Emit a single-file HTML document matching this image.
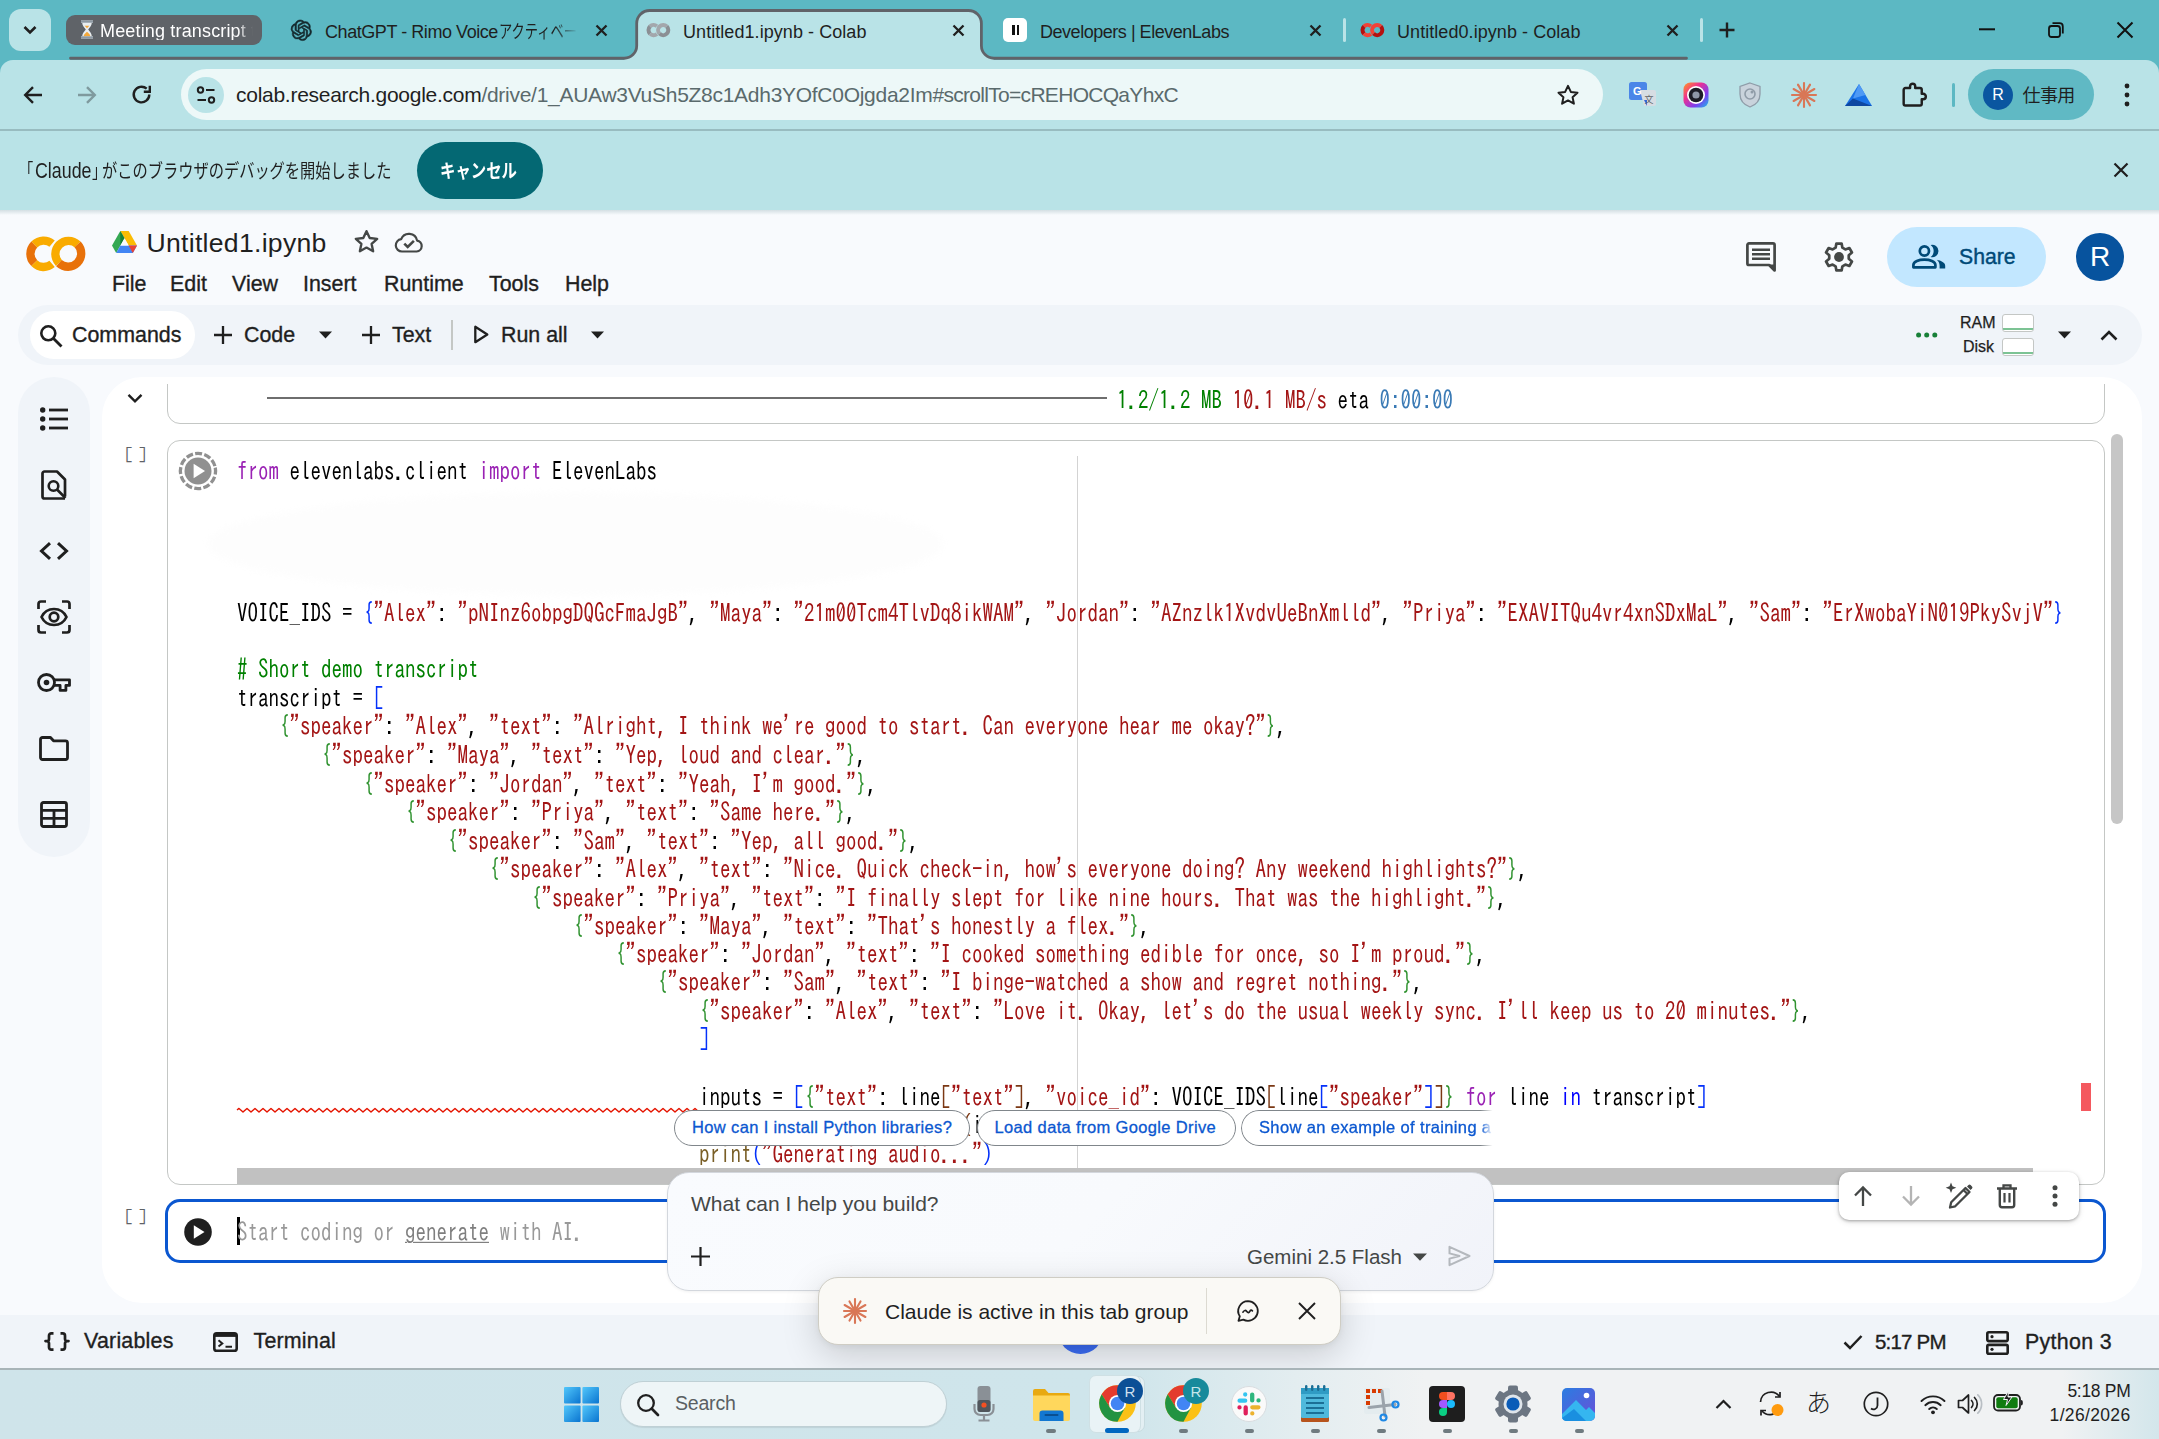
<!DOCTYPE html>
<html lang="ja">
<head>
<meta charset="utf-8">
<title>Untitled1.ipynb - Colab</title>
<style>
*{box-sizing:border-box;margin:0;padding:0}
html,body{width:2159px;height:1439px;overflow:hidden;background:#f8fafd}
body{position:relative;font-family:"Liberation Sans","Noto Sans CJK JP",sans-serif;color:#1f1f1f}
.abs{position:absolute}
.t{position:absolute;white-space:nowrap;line-height:1}
svg{position:absolute;overflow:visible}
/* ---------- browser chrome ---------- */
#tabstrip{position:absolute;left:0;top:0;width:2159px;height:80px;background:#5cb8c3}
#toolbar{position:absolute;left:0;top:60px;width:2159px;height:70px;background:#b9e3e7;border-top-left-radius:13px;border-top-right-radius:13px}
#tbline{position:absolute;left:0;top:129px;width:2159px;height:2px;background:#98bcc0}
#infobar{position:absolute;left:0;top:131px;width:2159px;height:79px;background:#b9e3e7}
#infoshadow{position:absolute;left:0;top:210px;width:2159px;height:5px;background:linear-gradient(#d4dfe3,#f8fafd)}
.tabtxt{font-size:18px;color:#1f1f1f;top:23px}
/* ---------- colab ---------- */
.menu{font-size:21.4px;top:274px;color:#1f1f1f;font-weight:400;-webkit-text-stroke:0.35px #1f1f1f}
.tb{font-size:21.4px;top:325px;color:#1f1f1f;-webkit-text-stroke:0.35px #1f1f1f}
.code{position:absolute;font-family:"IPAGothic","Liberation Mono",monospace;font-size:21px;line-height:23.899px;white-space:pre;color:#000;transform:scaleY(1.19);transform-origin:0 0}
.k{color:#9a22b4}.s{color:#a31515}.b1{color:#0431fa}.b2{color:#319331}.b3{color:#7b3814}.c{color:#008000}.f{color:#795e26}.kb{color:#0000ff}
.chip{position:absolute;top:1110px;height:36px;border:1px solid #80868b;border-radius:18px;background:#fff;color:#0b57d0;font-size:16.5px;line-height:33px;padding-left:17px;white-space:nowrap;overflow:hidden;letter-spacing:0.36px;-webkit-text-stroke:0.3px #0b57d0}
</style>
</head>
<body>
<!-- ================= TAB STRIP ================= -->
<div id="tabstrip"></div>
<div id="toolbar"></div>
<div id="tbline"></div>
<div id="infobar"></div>
<div id="infoshadow"></div>

<!--CHROME_START-->
<!-- tab search button -->
<div class="abs" style="left:9px;top:9px;width:42px;height:42px;border-radius:12px;background:#b9e3e7"></div>
<svg style="left:22px;top:24px" width="16" height="12" viewBox="0 0 16 12"><path d="M2.5 3 L8 8.5 L13.5 3" fill="none" stroke="#1f1f1f" stroke-width="2.6"/></svg>
<!-- tab group chip -->
<div class="abs" style="left:66px;top:15px;width:196px;height:30px;border-radius:9px;background:#5f6368"></div>
<svg style="left:80px;top:20px" width="14" height="19" viewBox="0 0 14 19"><path d="M1 0.5h12v2.2h-1.2c0 3-2.2 4.8-3.6 6.8 1.400 2 3.600 3.800 3.600 6.800H13v2.200H1v-2.200h1.200c0-3 2.200-4.800 3.600-6.800C4.400 7.500 2.200 5.700 2.200 2.700H1z" fill="#e9eef2"/><path d="M3.600 16.300c0.400-2 2-3.300 3.400-4.500 1.400 1.200 3 2.500 3.400 4.500z" fill="#f4a83a"/><path d="M4.600 5.800h4.800L7 8.300z" fill="#f4a83a"/><rect x="1" y="0.500" width="12" height="2.200" fill="#8d99a3"/><rect x="1" y="16.300" width="12" height="2.200" fill="#8d99a3"/></svg>
<div class="t" id="grp" style="left:100px;top:21.5px;font-size:18px;letter-spacing:0.16px;color:#fff;width:153px;overflow:hidden;-webkit-mask-image:linear-gradient(90deg,#000 90%,transparent 100%)">Meeting transcript t</div>
<!-- group underline + active tab -->
<svg style="left:0;top:0" width="2159" height="62" viewBox="0 0 2159 62">
 <path d="M624.200 61 V58.250 A12.500 12.500 0 0 0 636.700 45.750 V23.500 A13 13 0 0 1 649.700 10.500 H968.400 A13 13 0 0 1 981.400 23.500 V45.750 A12.500 12.500 0 0 0 993.900 58.250 V61z" fill="#b9e3e7"/>
 <path d="M70.500 58.250 H624.200 A12.500 12.500 0 0 0 636.700 45.750 V23.500 A13 13 0 0 1 649.700 10.500 H968.400 A13 13 0 0 1 981.400 23.500 V45.750 A12.500 12.500 0 0 0 993.900 58.250 H1686.500" fill="none" stroke="#606369" stroke-width="2.800" stroke-linecap="round"/>
 <rect x="1343" y="18" width="3" height="24" rx="1.500" fill="#b9e3e7"/>
 <rect x="1700" y="18" width="3" height="24" rx="1.500" fill="#b9e3e7"/>
</svg>
<!-- tab 2 : ChatGPT -->
<svg style="left:291.200px;top:19.600px" width="20.600" height="20.600" viewBox="0 0 24 24"><path fill="#14292d" stroke="#14292d" stroke-width="0.7" d="M22.2819 9.8211a5.9847 5.9847 0 0 0-.5157-4.9108 6.0462 6.0462 0 0 0-6.5098-2.9A6.0651 6.0651 0 0 0 4.9807 4.1818a5.9847 5.9847 0 0 0-3.9977 2.9 6.0462 6.0462 0 0 0 .7427 7.0966 5.98 5.98 0 0 0 .511 4.9107 6.051 6.051 0 0 0 6.5146 2.9001A5.9847 5.9847 0 0 0 13.2599 24a6.0557 6.0557 0 0 0 5.7718-4.2058 5.9894 5.9894 0 0 0 3.9977-2.9001 6.0557 6.0557 0 0 0-.7475-7.0729zm-9.022 12.6081a4.4755 4.4755 0 0 1-2.8764-1.0408l.1419-.0804 4.7783-2.7582a.7948.7948 0 0 0 .3927-.6813v-6.7369l2.02 1.1686a.071.071 0 0 1 .038.052v5.5826a4.504 4.504 0 0 1-4.4945 4.4944zm-9.6607-4.1254a4.4708 4.4708 0 0 1-.5346-3.0137l.142.0852 4.783 2.7582a.7712.7712 0 0 0 .7806 0l5.8428-3.3685v2.3324a.0804.0804 0 0 1-.0332.0615L9.74 19.9502a4.4992 4.4992 0 0 1-6.1408-1.6464zM2.3408 7.8956a4.485 4.485 0 0 1 2.3655-1.9728V11.6a.7664.7664 0 0 0 .3879.6765l5.8144 3.3543-2.0201 1.1685a.0757.0757 0 0 1-.071 0l-4.8303-2.7865A4.504 4.504 0 0 1 2.3408 7.872zm16.5963 3.8558L13.1038 8.364 15.1192 7.2a.0757.0757 0 0 1 .071 0l4.8303 2.7913a4.4944 4.4944 0 0 1-.6765 8.1042v-5.6772a.79.79 0 0 0-.407-.667zm2.0107-3.0231l-.142-.0852-4.7735-2.7818a.7759.7759 0 0 0-.7854 0L9.409 9.2297V6.8974a.0662.0662 0 0 1 .0284-.0615l4.8303-2.7866a4.4992 4.4992 0 0 1 6.6802 4.66zM8.3065 12.863l-2.02-1.1638a.0804.0804 0 0 1-.038-.0567V6.0742a4.4992 4.4992 0 0 1 7.3757-3.4537l-.142.0805L8.704 5.459a.7948.7948 0 0 0-.3927.6813zm1.0976-2.3654l2.602-1.4998 2.6069 1.4998v2.9994l-2.5974 1.4997-2.6067-1.4997Z"/></svg>
<div class="t tabtxt" id="tab2" style="left:325px;letter-spacing:-0.44px">ChatGPT - Rimo Voice</div>
<div class="t tabtxt" id="tab2j" style="left:499px;width:107px;overflow:hidden;transform:scaleX(0.735);transform-origin:left;-webkit-mask-image:linear-gradient(90deg,#000 70%,transparent 100%)">アクティベーション</div>
<svg style="left:595px;top:24px" width="13" height="13" viewBox="0 0 13 13"><path d="M1.500 1.500 L11.500 11.500 M11.500 1.500 L1.500 11.500" stroke="#1f1f1f" stroke-width="2.300"/></svg>
<!-- tab 3 : active -->
<svg style="left:645.5px;top:22.8px" width="25" height="15" viewBox="0 0 25 15"><g fill="none" stroke-width="4"><path d="M10.88 3.19 A5.1 5.1 0 0 0 3.99 3.49" stroke="#a3a7ac"/><path d="M3.99 3.49 A5.1 5.1 0 0 0 3.99 10.71" stroke="#8b8f94"/><path d="M3.99 10.71 A5.1 5.1 0 0 0 10.88 11.01" stroke="#a3a7ac"/><path d="M20.81 3.49 A5.1 5.1 0 0 0 13.59 10.71" stroke="#a3a7ac"/><path d="M13.59 10.71 A5.1 5.1 0 0 0 20.81 3.49" stroke="#8b8f94"/></g></svg>
<div class="t tabtxt" id="tab3" style="left:683px;letter-spacing:0.06px">Untitled1.ipynb - Colab</div>
<svg style="left:952px;top:24px" width="13" height="13" viewBox="0 0 13 13"><path d="M1.500 1.500 L11.500 11.500 M11.500 1.500 L1.500 11.500" stroke="#1f1f1f" stroke-width="2.300"/></svg>
<!-- tab 4 : ElevenLabs -->
<div class="abs" style="left:1003px;top:18px;width:24px;height:24px;border-radius:5px;background:#fff"></div>
<div class="abs" style="left:1012px;top:25px;width:2.500px;height:10px;background:#111"></div>
<div class="abs" style="left:1016.800px;top:25px;width:2.500px;height:10px;background:#111"></div>
<div class="t tabtxt" id="tab4" style="left:1040px;letter-spacing:-0.47px">Developers | ElevenLabs</div>
<svg style="left:1309px;top:24px" width="13" height="13" viewBox="0 0 13 13"><path d="M1.500 1.500 L11.500 11.500 M11.500 1.500 L1.500 11.500" stroke="#1f1f1f" stroke-width="2.300"/></svg>
<!-- tab 5 : Untitled0 -->
<svg style="left:1359.8px;top:22.8px" width="25" height="15" viewBox="0 0 25 15"><g fill="none" stroke-width="4"><path d="M10.88 3.19 A5.1 5.1 0 0 0 3.99 3.49" stroke="#f24236"/><path d="M3.99 3.49 A5.1 5.1 0 0 0 3.99 10.71" stroke="#b5100f"/><path d="M3.99 10.71 A5.1 5.1 0 0 0 10.88 11.01" stroke="#f24236"/><path d="M20.81 3.49 A5.1 5.1 0 0 0 13.59 10.71" stroke="#f24236"/><path d="M13.59 10.71 A5.1 5.1 0 0 0 20.81 3.49" stroke="#b5100f"/></g></svg>
<div class="t tabtxt" id="tab5" style="left:1397px;letter-spacing:0.06px">Untitled0.ipynb - Colab</div>
<svg style="left:1666px;top:24px" width="13" height="13" viewBox="0 0 13 13"><path d="M1.500 1.500 L11.500 11.500 M11.500 1.500 L1.500 11.500" stroke="#1f1f1f" stroke-width="2.300"/></svg>
<!-- new tab + -->
<svg style="left:1719px;top:22px" width="16" height="16" viewBox="0 0 16 16"><path d="M8 0.500V15.500M0.500 8H15.500" stroke="#1f1f1f" stroke-width="2.400"/></svg>
<!-- window controls -->
<svg style="left:1979px;top:28px" width="16" height="3" viewBox="0 0 16 3"><rect x="0" y="0.300" width="16" height="2" fill="#111"/></svg>
<svg style="left:2048px;top:22px" width="16" height="16" viewBox="0 0 16 16"><rect x="1" y="4" width="11" height="11" rx="2.500" fill="none" stroke="#111" stroke-width="1.800"/><path d="M4.500 1.200H11.500c2 0 3.300 1.300 3.300 3.300V11.500" fill="none" stroke="#111" stroke-width="1.800"/></svg>
<svg style="left:2116px;top:21px" width="18" height="18" viewBox="0 0 18 18"><path d="M1.500 1.500 L16.500 16.500 M16.500 1.500 L1.500 16.500" stroke="#111" stroke-width="2"/></svg>

<!-- ================= TOOLBAR ================= -->
<svg style="left:22px;top:84px" width="22" height="22" viewBox="0 0 22 22"><path d="M20 11H3.500M11 3.200L3.200 11l7.800 7.800" fill="none" stroke="#1f1f1f" stroke-width="2.400"/></svg>
<svg style="left:76px;top:84px" width="22" height="22" viewBox="0 0 22 22"><path d="M2 11H18.500M11 3.200L18.800 11l-7.800 7.800" fill="none" stroke="#7f9a9e" stroke-width="2.400"/></svg>
<svg style="left:130px;top:83px" width="23" height="23" viewBox="0 0 23 23"><path d="M19.300 11.500a7.800 7.800 0 1 1-2.600-5.800" fill="none" stroke="#1f1f1f" stroke-width="2.400"/><path d="M19.800 2.800V8.800H13.800" fill="none" stroke="#1f1f1f" stroke-width="2.400"/></svg>
<div class="abs" style="left:181px;top:69px;width:1422px;height:51px;border-radius:26px;background:#edf8f8"></div>
<div class="abs" style="left:188px;top:77px;width:36px;height:36px;border-radius:18px;background:#b9e3e7"></div>
<svg style="left:196px;top:85px" width="20" height="20" viewBox="0 0 20 20"><g fill="none" stroke="#1f1f1f" stroke-width="2"><circle cx="4.500" cy="5" r="2.700"/><path d="M10 5H18.500"/><circle cx="15.500" cy="15" r="2.700"/><path d="M1.500 15H10"/></g></svg>
<div class="t" id="url" style="left:236px;top:84px;font-size:21px;color:#5a6a6c;letter-spacing:-0.28px"><span style="color:#1f1f1f;letter-spacing:-0.27px">colab.research.google.com</span>/drive/1_AUAw3VuSh5Z8c1Adh3YOfC0Ojgda2Im<span style="letter-spacing:-0.7px">#scrollTo=cREHOCQaYhxC</span></div>
<svg style="left:1556px;top:83px" width="24" height="24" viewBox="0 0 24 24"><path d="M12 2.800l2.850 6.100 6.650.75-4.950 4.500 1.350 6.550L12 17.400 6.100 20.700l1.350-6.550L2.500 9.650l6.650-.75z" fill="none" stroke="#1f1f1f" stroke-width="2" stroke-linejoin="round"/></svg>
<!-- extensions -->
<svg style="left:1629px;top:82px" width="27" height="26" viewBox="0 0 27 26"><rect x="0" y="0" width="18" height="18" rx="2.500" fill="#4a86e8"/><path d="M11 8h14a2 2 0 0 1 2 2v12a2 2 0 0 1-2 2H15z" fill="#d7dde3"/><path d="M18 24l-3-6h3z" fill="#3367d6"/><text x="4" y="13" font-size="11" font-weight="bold" fill="#fff" font-family="Liberation Sans, sans-serif">G</text><text x="15.500" y="21" font-size="9" fill="#5f6368" font-family="Liberation Sans, Noto Sans CJK JP, sans-serif">文</text></svg>
<svg style="left:1683px;top:82px" width="26" height="26" viewBox="0 0 26 26"><defs><linearGradient id="rg" x1="0" y1="0" x2="1" y2="1"><stop offset="0" stop-color="#ff9a1f"/><stop offset=".35" stop-color="#f0308f"/><stop offset=".7" stop-color="#7a3ff0"/><stop offset="1" stop-color="#19c0e8"/></linearGradient></defs><rect x="0.500" y="0.500" width="25" height="25" rx="7" fill="url(#rg)"/><circle cx="13" cy="13" r="9" fill="#fff"/><circle cx="13" cy="13" r="7.300" fill="#1d1d27"/><circle cx="13" cy="13" r="3.600" fill="#8f97a8"/></svg>
<svg style="left:1739px;top:82px" width="22" height="26" viewBox="0 0 22 26"><path d="M11 1L21 4.500V12c0 6.500-4.500 11-10 13C5.500 23 1 18.500 1 12V4.500z" fill="#c9d3dc" stroke="#8f9ca8" stroke-width="1.300"/><circle cx="11" cy="12" r="5" fill="none" stroke="#8f9ca8" stroke-width="1.600"/><circle cx="13" cy="10" r="1.500" fill="#8f9ca8"/></svg>
<svg style="left:1791px;top:82px" width="26" height="26" viewBox="-13 -13 26 26"><g stroke="#d97757" stroke-width="2.100" stroke-linecap="round"><path d="M0 -12V12"/><path d="M0 -12V12" transform="rotate(30)"/><path d="M0 -12V12" transform="rotate(60)"/><path d="M0 -12V12" transform="rotate(90)"/><path d="M0 -12V12" transform="rotate(120)"/><path d="M0 -12V12" transform="rotate(150)"/></g></svg>
<svg style="left:1845px;top:84px" width="27" height="22" viewBox="0 0 27 22"><path d="M14 0L27 22H0z" fill="#1a73e8"/><path d="M14 0L20.500 11 8 14.500z" fill="#4f9af5"/><path d="M0 22L8 14.500 27 22z" fill="#0d47a1"/></svg>
<svg style="left:1899px;top:81px" width="28" height="28" viewBox="0 0 24 24"><path d="M9.500 4.500a2.200 2.200 0 0 1 4.400 0V6h4.100a1.500 1.500 0 0 1 1.500 1.500V11h1.200a2.300 2.300 0 0 1 0 4.600H19.500V19.500A1.500 1.500 0 0 1 18 21H5.500A1.500 1.500 0 0 1 4 19.500V7.500A1.500 1.500 0 0 1 5.500 6H9.500z" fill="none" stroke="#1f1f1f" stroke-width="2.100" stroke-linejoin="round"/></svg>
<div class="abs" style="left:1952px;top:83px;width:3px;height:24px;border-radius:1.500px;background:#5cb8c3"></div>
<div class="abs" style="left:1968px;top:69px;width:126px;height:51px;border-radius:26px;background:#60b9c4"></div>
<div class="abs" style="left:1983px;top:80px;width:30px;height:30px;border-radius:15px;background:#0a56a0"></div>
<div class="t" style="left:1992.300px;top:87px;font-size:16px;color:#fff">R</div>
<div class="t" id="prof" style="left:2022.500px;top:86.500px;font-size:18px;color:#1f1f1f;letter-spacing:-0.6px">仕事用</div>
<svg style="left:2124px;top:83px" width="6" height="24" viewBox="0 0 6 24"><circle cx="3" cy="3" r="2.400" fill="#1f1f1f"/><circle cx="3" cy="12" r="2.400" fill="#1f1f1f"/><circle cx="3" cy="21" r="2.400" fill="#1f1f1f"/></svg>

<!-- ================= INFOBAR ================= -->
<div class="t" id="info0" style="left:18.500px;top:161.500px;font-size:19px;color:#1f1f1f;transform:scaleX(0.75);transform-origin:left">「</div>
<div class="t" id="info1" style="left:35px;top:160px;font-size:22px;color:#1f1f1f;transform:scaleX(0.81);transform-origin:left">Claude</div>
<div class="t" id="info2" style="left:91.500px;top:161.500px;font-size:19px;color:#1f1f1f;transform:scaleX(0.75);transform-origin:left">」</div>
<div class="t" id="info" style="left:102px;top:161.500px;font-size:19px;color:#1f1f1f;transform:scaleX(0.802);transform-origin:left">がこのブラウザのデバッグを開始しました</div>
<div class="abs" style="left:417px;top:142px;width:126px;height:57px;border-radius:28.500px;background:#046873"></div>
<div class="t" id="cancel" style="left:440px;top:162px;font-size:19px;font-weight:bold;color:#fff;transform:scaleX(0.81);transform-origin:left">キャンセル</div>
<svg style="left:2113px;top:162px" width="16" height="16" viewBox="0 0 16 16"><path d="M1.500 1.500 L14.500 14.500 M14.500 1.500 L1.500 14.500" stroke="#1f1f1f" stroke-width="2.200"/></svg>
<!--CHROME_END-->
<!--COLAB_START-->
<!-- ===== Colab header ===== -->
<svg style="left:26px;top:236px" width="60" height="36" viewBox="0 0 60 36">
 <g fill="none" stroke-width="8.300">
  <path d="M26.090 7.690 A13.200 13.200 0 0 0 8.270 8.470" stroke="#f9ab00"/>
  <path d="M8.270 8.470 A13.200 13.200 0 0 0 8.270 27.130" stroke="#e8710a"/>
  <path d="M8.270 27.130 A13.200 13.200 0 0 0 26.090 27.910" stroke="#f9ab00"/>
  <path d="M51.630 8.470 A13.200 13.200 0 0 0 32.970 27.130" stroke="#f9ab00"/>
  <path d="M32.970 27.130 A13.200 13.200 0 0 0 51.630 8.470" stroke="#e8710a"/>
 </g>
</svg>
<svg style="left:112px;top:231px" width="25" height="22" viewBox="0 0 25 22"><path d="M8.300 0h8.400L25 14.400h-8.400z" fill="#fbbc04"/><path d="M8.300 0L0 14.400 4.200 22 12.500 7.300z" fill="#34a853"/><path d="M4.200 22h16.600l4.200-7.600H8.400z" fill="#4285f4"/><path d="M16.600 14.400H25L20.800 22z" fill="#ea4335"/><path d="M8.300 0l4.200 7.300-4.100 7.100z" fill="#188038"/><path d="M8.400 14.400h8.200l-4.100-7.100z" fill="#f8fafd"/></svg>
<div class="t" id="title" style="left:146.500px;top:229.500px;font-size:26.6px;letter-spacing:0.28px;color:#1f1f1f">Untitled1.ipynb</div>
<svg style="left:353.400px;top:228.300px" width="27" height="27" viewBox="0 0 24 24"><path d="M12 2.800l2.850 6.100 6.650.75-4.950 4.500 1.350 6.550L12 17.400 6.100 20.700l1.350-6.550L2.500 9.650l6.650-.75z" fill="none" stroke="#444746" stroke-width="2.100" stroke-linejoin="round"/></svg>
<svg style="left:394px;top:231px" width="30" height="22" viewBox="0 0 30 22"><path d="M8 20.500a6.200 6.200 0 0 1-.8-12.350A8.300 8.300 0 0 1 23.100 9.600a5.500 5.500 0 0 1-.4 10.900z" fill="none" stroke="#444746" stroke-width="2.200" stroke-linejoin="round"/><path d="M10.300 12.600l3.400 3.400 6.200-6.200" fill="none" stroke="#444746" stroke-width="2.600"/></svg>
<div class="t menu" id="m1" style="left:112px">File</div>
<div class="t menu" id="m2" style="left:170px">Edit</div>
<div class="t menu" id="m3" style="left:232px">View</div>
<div class="t menu" id="m4" style="left:303px">Insert</div>
<div class="t menu" id="m5" style="left:384px">Runtime</div>
<div class="t menu" id="m6" style="left:489px">Tools</div>
<div class="t menu" id="m7" style="left:565px">Help</div>
<!-- right header -->
<svg style="left:1746px;top:242px" width="30" height="30" viewBox="0 0 30 30"><path d="M3 1.400h24a1.600 1.600 0 0 1 1.600 1.600V28.500l-5.500-5.500H3a1.600 1.600 0 0 1-1.600-1.600V3A1.600 1.600 0 0 1 3 1.400z" fill="none" stroke="#444746" stroke-width="2.700" stroke-linejoin="round"/><path d="M28.600 28.500l-6-6h6z" fill="#444746"/><path d="M6 7.700h18M6 12.200h18M6 16.700h18" stroke="#444746" stroke-width="2.600"/></svg>
<svg style="left:1823px;top:241px" width="32" height="32" viewBox="-16 -16 32 32"><path d="M3.39 -9.30 L2.61 -13.45 L-2.61 -13.45 L-3.39 -9.30 L-6.36 -7.58 L-10.34 -8.99 L-12.95 -4.46 L-9.75 -1.72 L-9.75 1.72 L-12.95 4.46 L-10.34 8.99 L-6.36 7.58 L-3.39 9.30 L-2.61 13.45 L2.61 13.45 L3.39 9.30 L6.36 7.58 L10.34 8.99 L12.95 4.46 L9.75 1.72 L9.75 -1.72 L12.95 -4.46 L10.34 -8.99 L6.36 -7.58z" fill="none" stroke="#444746" stroke-width="2.700" stroke-linejoin="round"/><circle r="4.900" fill="#444746"/></svg>
<div class="abs" style="left:1887px;top:227px;width:159px;height:60px;border-radius:30px;background:#c2e7ff"></div>
<svg style="left:1912px;top:244px" width="34" height="25" viewBox="0 0 34 25"><g fill="none" stroke="#004a77" stroke-width="2.700"><circle cx="12.400" cy="7" r="4.600"/><path d="M1.400 23.300v-2.200c0-3.600 5.600-5.400 11-5.400s11 1.800 11 5.400v2.200z" stroke-linejoin="round"/></g><path d="M18.600 0.900a6.300 6.300 0 1 1 0 12.200 7.600 7.600 0 0 0 0-12.200z" fill="#004a77"/><path d="M24.800 15.800c4.400.9 8.400 2.800 8.400 6v2.800h-5.600v-2.800c0-2.600-1.100-4.500-2.800-6z" fill="#004a77"/></svg>
<div class="t" id="share" style="left:1959px;top:246px;font-size:21.2px;color:#004a77;-webkit-text-stroke:0.4px #004a77">Share</div>
<div class="abs" style="left:2076px;top:233px;width:48px;height:48px;border-radius:24px;background:#07539e"></div>
<div class="t" id="avR" style="left:2090px;top:243px;font-size:28px;color:#fff">R</div>
<!-- ===== Colab toolbar ===== -->
<div class="abs" style="left:18px;top:305px;width:2124px;height:60px;border-radius:30px;background:#f0f4f9"></div>
<div class="abs" style="left:30px;top:311px;width:165px;height:48px;border-radius:24px;background:#fff"></div>
<svg style="left:39px;top:324px" width="24" height="24" viewBox="0 0 24 24"><circle cx="9.300" cy="9.300" r="7" fill="none" stroke="#1f1f1f" stroke-width="2.600"/><path d="M14.500 14.500L22.500 22.500" stroke="#1f1f1f" stroke-width="2.800"/></svg>
<div class="t tb" id="cmd" style="left:72px">Commands</div>
<svg style="left:214px;top:326px" width="18" height="18" viewBox="0 0 18 18"><path d="M9 0V18M0 9H18" stroke="#1f1f1f" stroke-width="2.300"/></svg>
<div class="t tb" id="codeb" style="left:244px">Code</div>
<svg style="left:319px;top:331px" width="13" height="8" viewBox="0 0 13 8"><path d="M0 0.500h13L6.500 7.500z" fill="#1f1f1f"/></svg>
<svg style="left:362px;top:326px" width="18" height="18" viewBox="0 0 18 18"><path d="M9 0V18M0 9H18" stroke="#1f1f1f" stroke-width="2.300"/></svg>
<div class="t tb" id="textb" style="left:392px">Text</div>
<div class="abs" style="left:451px;top:320px;width:2px;height:30px;background:#c4c7c5"></div>
<svg style="left:474px;top:325px" width="15" height="19" viewBox="0 0 15 19"><path d="M1.300 1.800V17.200L13.300 9.500z" fill="none" stroke="#1f1f1f" stroke-width="2.300" stroke-linejoin="round"/></svg>
<div class="t tb" id="runall" style="left:501px">Run all</div>
<svg style="left:591px;top:331px" width="13" height="8" viewBox="0 0 13 8"><path d="M0 0.500h13L6.500 7.500z" fill="#1f1f1f"/></svg>
<!-- right of toolbar -->
<svg style="left:1916px;top:332px" width="22" height="6" viewBox="0 0 22 6"><circle cx="2.600" cy="3" r="2.500" fill="#188038"/><circle cx="10.700" cy="3" r="2.500" fill="#188038"/><circle cx="18.800" cy="3" r="2.500" fill="#188038"/></svg>
<div class="t" id="ram" style="left:1960px;top:315px;font-size:16px;color:#1f1f1f;-webkit-text-stroke:0.25px #1f1f1f">RAM</div>
<div class="t" id="disk" style="left:1963px;top:339px;font-size:16px;color:#1f1f1f;-webkit-text-stroke:0.25px #1f1f1f">Disk</div>
<div class="abs" style="left:2002px;top:314px;width:32px;height:18px;border:1px solid #c4c7c5;border-radius:3px;background:linear-gradient(#fff 0,#fff 13px,#7cc394 13px,#7cc394 15px,#fff 15px)"></div>
<div class="abs" style="left:2002px;top:338px;width:32px;height:18px;border:1px solid #c4c7c5;border-radius:3px;background:linear-gradient(#fff 0,#fff 13px,#7cc394 13px,#7cc394 15px,#fff 15px)"></div>
<svg style="left:2058px;top:331px" width="13" height="8" viewBox="0 0 13 8"><path d="M0 0.500h13L6.500 7.500z" fill="#1f1f1f"/></svg>
<svg style="left:2100px;top:329px" width="18" height="12" viewBox="0 0 18 12"><path d="M1.500 10.500L9 3l7.500 7.500" fill="none" stroke="#1f1f1f" stroke-width="2.600"/></svg>
<!-- ===== Left sidebar ===== -->
<div class="abs" style="left:18px;top:377px;width:72px;height:480px;border-radius:36px;background:#f0f4f9"></div>
<svg style="left:40px;top:407px" width="28" height="24" viewBox="0 0 28 24"><g fill="#1f1f1f"><circle cx="2.700" cy="3" r="2.700"/><circle cx="2.700" cy="12" r="2.700"/><circle cx="2.700" cy="21" r="2.700"/><rect x="9" y="1.600" width="19" height="2.800"/><rect x="9" y="10.600" width="19" height="2.800"/><rect x="9" y="19.600" width="19" height="2.800"/></g></svg>
<svg style="left:41px;top:470px" width="26" height="30" viewBox="0 0 26 30"><path d="M1.500 3.500a2 2 0 0 1 2-2H16L24 9.500v16.800M24 28.500H3.500a2 2 0 0 1-2-2v-23" fill="none" stroke="#1f1f1f" stroke-width="2.700" stroke-linejoin="round"/><circle cx="12.500" cy="16" r="4.800" fill="none" stroke="#1f1f1f" stroke-width="2.600"/><path d="M16 19.500L24.500 28" stroke="#1f1f1f" stroke-width="2.700"/></svg>
<svg style="left:39px;top:542px" width="30" height="18" viewBox="0 0 30 18"><path d="M11 1.200L2.500 9l8.500 7.800M19 1.200L27.500 9 19 16.800" fill="none" stroke="#1f1f1f" stroke-width="3"/></svg>
<svg style="left:37px;top:600px" width="34" height="34" viewBox="0 0 34 34"><g fill="none" stroke="#1f1f1f" stroke-width="2.700"><path d="M1.500 9V4a2.500 2.500 0 0 1 2.500-2.500h5M25 1.500h5A2.500 2.500 0 0 1 32.500 4v5M32.500 25v5a2.500 2.500 0 0 1-2.500 2.500h-5M9 32.500H4A2.500 2.500 0 0 1 1.500 30v-5"/><path d="M4.500 17C7 11.800 11.500 9 17 9s10 2.800 12.500 8C27 22.200 22.500 25 17 25S7 22.200 4.500 17z" stroke-linejoin="round"/><circle cx="17" cy="17" r="4.300"/></g></svg>
<svg style="left:37px;top:673px" width="34" height="19" viewBox="0 0 34 19"><g fill="none" stroke="#1f1f1f" stroke-width="2.800"><circle cx="9.500" cy="9.500" r="8"/><path d="M17 6.800h15.500v5.600h-3.600v5h-5.800v-5H17" stroke-linejoin="round"/></g><circle cx="9.500" cy="9.500" r="2.800" fill="#1f1f1f"/></svg>
<svg style="left:39px;top:736px" width="30" height="25" viewBox="0 0 30 25"><path d="M1.500 3.500a2 2 0 0 1 2-2h8l3 3.300h12a2 2 0 0 1 2 2V21.500a2 2 0 0 1-2 2h-23a2 2 0 0 1-2-2z" fill="none" stroke="#1f1f1f" stroke-width="2.800" stroke-linejoin="round"/></svg>
<svg style="left:40px;top:801px" width="28" height="27" viewBox="0 0 28 27"><g fill="none" stroke="#1f1f1f" stroke-width="2.800"><rect x="1.500" y="1.500" width="25" height="24" rx="2"/><path d="M1.500 9.300h25M1.500 17.400h25M14 9.300V25.500"/></g></svg>
<!-- ===== Notebook panel ===== -->
<div class="abs" id="nb" style="left:102px;top:377px;width:2040px;height:926px;border-radius:40px;background:#fff"></div>
<!--NB_START-->
<!-- output cell -->
<div class="abs" style="left:167px;top:370px;width:1938px;height:54px;border:1px solid #c4c7c5;border-radius:0 0 13px 13px;background:#fff"></div>
<div class="abs" style="left:102px;top:365px;width:2040px;height:19px;background:#f8fafd"></div>
<div class="abs" style="left:102px;top:377px;width:2040px;height:40px;border-radius:40px 40px 0 0;background:#fff;clip-path:inset(0 0 33px 0)"></div>
<svg style="left:127px;top:393px" width="16" height="11" viewBox="0 0 16 11"><path d="M1.500 1.800L8 8.300l6.500-6.500" fill="none" stroke="#1f1f1f" stroke-width="2.400"/></svg>
<div class="abs" style="left:267px;top:397px;width:840px;height:1.600px;background:#6e6e6e"></div>
<div class="code" id="outl" style="left:1117px;top:386px"><span style="color:#008000">1.2/1.2 MB</span> <span style="color:#a31515">10.1 MB/s</span> eta <span style="color:#3a7ab5">0:00:00</span></div>
<!-- code cell 1 -->
<div class="abs" style="left:167px;top:440px;width:1938px;height:745px;border:1px solid #c4c7c5;border-radius:13px;background:#fff"></div>
<div class="code" id="br1" style="left:124.5px;top:442px;font-size:17px;line-height:26px;color:#5f6368;letter-spacing:-1.6px;transform:none">[ ]</div>
<svg style="left:177.800px;top:450.900px" width="40" height="40" viewBox="-20 -20 40 40"><circle r="17.600" fill="none" stroke="#909090" stroke-width="3.300" stroke-dasharray="6.900 2.315" transform="rotate(-11)"/><circle r="13.500" fill="#909090"/><path d="M-4.400 -7.200L7 0-4.400 7.200z" fill="#fff"/></svg>
<div class="abs" style="left:208px;top:493px;width:735px;height:102px;border-radius:50%;background:#fdfdfd;filter:blur(3px)"></div>
<div class="abs" style="left:1077px;top:456px;width:1px;height:713px;background:#d3d3d3"></div>
<div class="code" id="code1" style="left:237px;top:457px"><span class="k">from</span> elevenlabs.client <span class="k">import</span> ElevenLabs




VOICE_IDS = <span class="b1">{</span><span class="s">"Alex"</span>: <span class="s">"pNInz6obpgDQGcFmaJgB"</span>, <span class="s">"Maya"</span>: <span class="s">"21m00Tcm4TlvDq8ikWAM"</span>, <span class="s">"Jordan"</span>: <span class="s">"AZnzlk1XvdvUeBnXmlld"</span>, <span class="s">"Priya"</span>: <span class="s">"EXAVITQu4vr4xnSDxMaL"</span>, <span class="s">"Sam"</span>: <span class="s">"ErXwobaYiN019PkySvjV"</span><span class="b1">}</span>

<span class="c"># Short demo transcript</span>
transcript = <span class="b1">[</span>
    <span class="b2">{</span><span class="s">"speaker"</span>: <span class="s">"Alex"</span>, <span class="s">"text"</span>: <span class="s">"Alright, I think we're good to start. Can everyone hear me okay?"</span><span class="b2">}</span>,
        <span class="b2">{</span><span class="s">"speaker"</span>: <span class="s">"Maya"</span>, <span class="s">"text"</span>: <span class="s">"Yep, loud and clear."</span><span class="b2">}</span>,
            <span class="b2">{</span><span class="s">"speaker"</span>: <span class="s">"Jordan"</span>, <span class="s">"text"</span>: <span class="s">"Yeah, I'm good."</span><span class="b2">}</span>,
                <span class="b2">{</span><span class="s">"speaker"</span>: <span class="s">"Priya"</span>, <span class="s">"text"</span>: <span class="s">"Same here."</span><span class="b2">}</span>,
                    <span class="b2">{</span><span class="s">"speaker"</span>: <span class="s">"Sam"</span>, <span class="s">"text"</span>: <span class="s">"Yep, all good."</span><span class="b2">}</span>,
                        <span class="b2">{</span><span class="s">"speaker"</span>: <span class="s">"Alex"</span>, <span class="s">"text"</span>: <span class="s">"Nice. Quick check-in, how's everyone doing? Any weekend highlights?"</span><span class="b2">}</span>,
                            <span class="b2">{</span><span class="s">"speaker"</span>: <span class="s">"Priya"</span>, <span class="s">"text"</span>: <span class="s">"I finally slept for like nine hours. That was the highlight."</span><span class="b2">}</span>,
                                <span class="b2">{</span><span class="s">"speaker"</span>: <span class="s">"Maya"</span>, <span class="s">"text"</span>: <span class="s">"That's honestly a flex."</span><span class="b2">}</span>,
                                    <span class="b2">{</span><span class="s">"speaker"</span>: <span class="s">"Jordan"</span>, <span class="s">"text"</span>: <span class="s">"I cooked something edible for once, so I'm proud."</span><span class="b2">}</span>,
                                        <span class="b2">{</span><span class="s">"speaker"</span>: <span class="s">"Sam"</span>, <span class="s">"text"</span>: <span class="s">"I binge-watched a show and regret nothing."</span><span class="b2">}</span>,
                                            <span class="b2">{</span><span class="s">"speaker"</span>: <span class="s">"Alex"</span>, <span class="s">"text"</span>: <span class="s">"Love it. Okay, let's do the usual weekly sync. I'll keep us to 20 minutes."</span><span class="b2">}</span>,
                                            <span class="b1">]</span>

                                            inputs = <span class="b1">[</span><span class="b2">{</span><span class="s">"text"</span>: line<span class="b3">[</span><span class="s">"text"</span><span class="b3">]</span>, <span class="s">"voice_id"</span>: VOICE_IDS<span class="b3">[</span>line<span class="b1">[</span><span class="s">"speaker"</span><span class="b1">]</span><span class="b3">]</span><span class="b2">}</span> <span class="k">for</span> line <span class="kb">in</span> transcript<span class="b1">]</span>
                                            audio = client.generate_d<span class="b3">(</span>inputs<span class="b3">)</span>
                                            <span class="f">print</span><span class="b1">(</span><span class="s">"Generating audio..."</span><span class="b1">)</span></div>
<svg style="left:237px;top:1107.6px" width="461" height="4.5" viewBox="0 0 461 4.5"><path d="M0 2 L2 0.4 L6 4.1 L10 0.4 L14 4.1 L18 0.4 L22 4.1 L26 0.4 L30 4.1 L34 0.4 L38 4.1 L42 0.4 L46 4.1 L50 0.4 L54 4.1 L58 0.4 L62 4.1 L66 0.4 L70 4.1 L74 0.4 L78 4.1 L82 0.4 L86 4.1 L90 0.4 L94 4.1 L98 0.4 L102 4.1 L106 0.4 L110 4.1 L114 0.4 L118 4.1 L122 0.4 L126 4.1 L130 0.4 L134 4.1 L138 0.4 L142 4.1 L146 0.4 L150 4.1 L154 0.4 L158 4.1 L162 0.4 L166 4.1 L170 0.4 L174 4.1 L178 0.4 L182 4.1 L186 0.4 L190 4.1 L194 0.4 L198 4.1 L202 0.4 L206 4.1 L210 0.4 L214 4.1 L218 0.4 L222 4.1 L226 0.4 L230 4.1 L234 0.4 L238 4.1 L242 0.4 L246 4.1 L250 0.4 L254 4.1 L258 0.4 L262 4.1 L266 0.4 L270 4.1 L274 0.4 L278 4.1 L282 0.4 L286 4.1 L290 0.4 L294 4.1 L298 0.4 L302 4.1 L306 0.4 L310 4.1 L314 0.4 L318 4.1 L322 0.4 L326 4.1 L330 0.4 L334 4.1 L338 0.4 L342 4.1 L346 0.4 L350 4.1 L354 0.4 L358 4.1 L362 0.4 L366 4.1 L370 0.4 L374 4.1 L378 0.4 L382 4.1 L386 0.4 L390 4.1 L394 0.4 L398 4.1 L402 0.4 L406 4.1 L410 0.4 L414 4.1 L418 0.4 L422 4.1 L426 0.4 L430 4.1 L434 0.4 L438 4.1 L442 0.4 L446 4.1 L450 0.4 L454 4.1 L458 0.4 L462 4.1" fill="none" stroke="#e51400" stroke-width="1.400" stroke-linejoin="round"/></svg>
<div class="abs" style="left:237px;top:1168px;width:1796px;height:16px;background:#c1c1c1"></div>
<div class="abs" style="left:2081px;top:1083px;width:10px;height:28px;background:#f4595f"></div>
<!-- page scrollbar -->
<div class="abs" style="left:2111px;top:434px;width:12px;height:390px;border-radius:6px;background:#c6c6c6"></div>
<!-- chips -->
<div class="chip" id="chip1" style="left:674px;width:296px">How can I install Python libraries?</div>
<div class="chip" id="chip2" style="left:976.500px;width:259px">Load data from Google Drive</div>
<div class="chip" id="chip3" style="left:1241px;width:272px;border-right:none;border-radius:18px 0 0 18px;-webkit-mask-image:linear-gradient(90deg,#000 88%,transparent 92.500%)">Show an example of training a</div>
<!-- code cell 2 (focused) -->
<div class="abs" style="left:165px;top:1199px;width:1941px;height:64px;border:3px solid #0b57d0;border-radius:15px;background:#fff"></div>
<div class="code" id="br2" style="left:124.5px;top:1204px;font-size:17px;line-height:26px;color:#5f6368;letter-spacing:-1.6px;transform:none">[ ]</div>
<svg style="left:184px;top:1218px" width="28" height="28" viewBox="-14 -14 28 28"><circle r="13.800" fill="#1f1f1f"/><path d="M-4.200 -6.800L6.500 0-4.200 6.800z" fill="#fff"/></svg>
<div class="abs" style="left:237px;top:1217px;width:3px;height:28px;background:#000"></div>
<div class="code" id="ph" style="left:237px;top:1217.500px;color:#999">Start coding or <span style="text-decoration:underline;text-decoration-thickness:1px;color:#7f7f7f">generate</span> with AI.</div>
<!-- AI prompt box -->
<div class="abs" style="left:667px;top:1172px;width:827px;height:119px;border:1px solid #d3d7dd;border-radius:22px;background:linear-gradient(135deg,#f9fbfe 0%,#f8fafd 50%,#f1f3f9 100%);box-shadow:0 1px 3px rgba(0,0,0,0.06)"></div>
<div class="t" id="whatcan" style="left:691px;top:1193px;font-size:21px;color:#444746">What can I help you build?</div>
<svg style="left:691px;top:1247px" width="19" height="19" viewBox="0 0 19 19"><path d="M9.500 0V19M0 9.500H19" stroke="#1f1f1f" stroke-width="2.200"/></svg>
<div class="t" id="gem" style="left:1247px;top:1247px;font-size:20.500px;color:#444746">Gemini 2.5 Flash</div>
<svg style="left:1413px;top:1253px" width="14" height="8" viewBox="0 0 14 8"><path d="M0 0.500h14L7 7.800z" fill="#444746"/></svg>
<svg style="left:1448px;top:1245px" width="24" height="22" viewBox="0 0 24 22"><path d="M1.500 1.800L21.500 11 1.500 20.200V13.600L11.500 11 1.500 8.400z" fill="none" stroke="#b4b8bd" stroke-width="2" stroke-linejoin="round"/></svg>
<!-- cell toolbar -->
<div class="abs" style="left:1839px;top:1172px;width:240px;height:48px;border-radius:10px;background:#fff;box-shadow:0 1px 3px rgba(0,0,0,0.3),0 2px 6px rgba(0,0,0,0.12)"></div>
<svg style="left:1852px;top:1185px" width="22" height="22" viewBox="0 0 22 22"><path d="M11 21V3M3 10.500L11 2.500l8 8" fill="none" stroke="#444746" stroke-width="2.300"/></svg>
<svg style="left:1900px;top:1185px" width="22" height="22" viewBox="0 0 22 22"><path d="M11 1V19M3 11.500L11 19.500l8-8" fill="none" stroke="#b4b4b4" stroke-width="2.300"/></svg>
<svg style="left:1945px;top:1182px" width="28" height="28" viewBox="0 0 28 28"><path d="M5 25.500l1.200-5.200L20.500 6l4 4L10.200 24.300z" fill="none" stroke="#444746" stroke-width="2.300" stroke-linejoin="round"/><path d="M18.500 8L22.500 12" stroke="#444746" stroke-width="2.300"/><path d="M22 4.500l1.500-1.500a1.500 1.500 0 0 1 2.100 0l1.400 1.400a1.500 1.500 0 0 1 0 2.100L25.500 8z" fill="#444746"/><path d="M6 0.500l1.500 3.800 3.800 1.500-3.800 1.500L6 11.100 4.500 7.300 0.700 5.800l3.800-1.500z" fill="#444746"/></svg>
<svg style="left:1996px;top:1184px" width="22" height="25" viewBox="0 0 22 25"><path d="M1 4.500h20M7.500 4V1.300h7V4" fill="none" stroke="#444746" stroke-width="2.300"/><path d="M3.800 4.500V21a2.200 2.200 0 0 0 2.200 2.200h10a2.200 2.200 0 0 0 2.200-2.200V4.500" fill="none" stroke="#444746" stroke-width="2.400"/><path d="M8.500 9v9.500M13.500 9v9.500" stroke="#444746" stroke-width="2.200"/></svg>
<svg style="left:2052px;top:1185px" width="6" height="22" viewBox="0 0 6 22"><circle cx="3" cy="2.700" r="2.500" fill="#444746"/><circle cx="3" cy="11" r="2.500" fill="#444746"/><circle cx="3" cy="19.300" r="2.500" fill="#444746"/></svg>
<!-- bottom status bar -->
<div class="abs" style="left:0;top:1315px;width:2159px;height:54px;background:#f0f4f9"></div>
<div class="abs" style="left:1058px;top:1309px;width:45px;height:45px;border-radius:22.500px;background:#3b6cf2"></div>
<svg style="left:44px;top:1332px" width="26" height="19" viewBox="0 0 26 19"><g fill="none" stroke="#1f1f1f" stroke-width="2.700" stroke-linejoin="round"><path d="M9.500 1.400H7.300a2.300 2.300 0 0 0-2.300 2.300v3.200a2.200 2.200 0 0 1-2.200 2.200H1.500h1.300A2.200 2.200 0 0 1 5 11.300v4a2.300 2.300 0 0 0 2.300 2.300h2.200"/><path d="M16.500 1.400h2.200A2.300 2.300 0 0 1 21 3.700v3.200a2.200 2.200 0 0 0 2.200 2.200h1.300-1.300A2.200 2.200 0 0 0 21 11.300v4a2.300 2.300 0 0 1-2.300 2.300h-2.200"/></g></svg>
<div class="t" id="vars" style="left:84px;top:1331px;font-size:21.400px;letter-spacing:0.23px;color:#1f1f1f;-webkit-text-stroke:0.35px #1f1f1f">Variables</div>
<svg style="left:213px;top:1332px" width="25" height="20" viewBox="0 0 25 20"><rect x="1.300" y="1.300" width="22.400" height="17.400" rx="2.300" fill="none" stroke="#1f1f1f" stroke-width="2.600"/><rect x="1.300" y="1.300" width="22.400" height="3.600" fill="#1f1f1f"/><path d="M5.500 8.300l3.800 3.100-3.800 3.100M12.500 14.800h6.500" fill="none" stroke="#1f1f1f" stroke-width="2"/></svg>
<div class="t" id="term" style="left:253.500px;top:1331px;font-size:21.400px;letter-spacing:0.2px;color:#1f1f1f;-webkit-text-stroke:0.35px #1f1f1f">Terminal</div>
<svg style="left:1843px;top:1334px" width="20" height="16" viewBox="0 0 20 16"><path d="M1.500 8.500L7 14 18.500 2" fill="none" stroke="#1f1f1f" stroke-width="2.500"/></svg>
<div class="t" id="time517" style="left:1875px;top:1332px;font-size:20.500px;letter-spacing:-0.8px;color:#1f1f1f;-webkit-text-stroke:0.35px #1f1f1f">5:17 PM</div>
<svg style="left:1986px;top:1331px" width="23" height="24" viewBox="0 0 23 24"><g fill="none" stroke="#1f1f1f" stroke-width="2.600"><rect x="1.300" y="1.300" width="20.400" height="8.800" rx="1.500"/><rect x="1.300" y="13.900" width="20.400" height="8.800" rx="1.500"/></g><circle cx="6" cy="5.700" r="1.600" fill="#1f1f1f"/><circle cx="6" cy="18.300" r="1.600" fill="#1f1f1f"/></svg>
<div class="t" id="py3" style="left:2025px;top:1332px;font-size:21.400px;letter-spacing:0.3px;color:#1f1f1f;-webkit-text-stroke:0.35px #1f1f1f">Python 3</div>
<!-- Claude toast -->
<div class="abs" style="left:818px;top:1277px;width:523px;height:68px;border:1px solid #cfcdc4;border-radius:20px;background:#faf9f5;box-shadow:0 10px 36px rgba(0,0,0,0.17),0 2px 6px rgba(0,0,0,0.05)"></div>
<svg style="left:842px;top:1298px" width="26" height="26" viewBox="-13 -13 26 26"><g stroke="#d97757" stroke-width="2.100" stroke-linecap="round"><path d="M0 -12V12"/><path d="M0 -11V11" transform="rotate(30)"/><path d="M0 -12V12" transform="rotate(60)"/><path d="M0 -11V11" transform="rotate(90)"/><path d="M0 -12V12" transform="rotate(120)"/><path d="M0 -11V11" transform="rotate(150)"/></g></svg>
<div class="t" id="claude" style="left:885px;top:1301px;font-size:21px;color:#1f1f1f">Claude is active in this tab group</div>
<div class="abs" style="left:1206px;top:1288px;width:1px;height:46px;background:#dcdad1"></div>
<svg style="left:1236px;top:1299px" width="24" height="24" viewBox="0 0 24 24"><path d="M12 2.200a9.800 9.800 0 0 1 0 19.600c-1.700 0-3.300-.4-4.700-1.200L2.500 21.800l1.300-4.500A9.800 9.800 0 0 1 12 2.200z" fill="none" stroke="#1f1f1f" stroke-width="1.800" stroke-linejoin="round"/><path d="M7 13.200c1.200-2.200 2.600-2.200 3.800-.6 1.200 1.600 2.300 1.200 3-.2.700-1.400 1.600-1.600 2.600-.6" fill="none" stroke="#1f1f1f" stroke-width="1.700" stroke-linecap="round"/></svg>
<svg style="left:1298px;top:1302px" width="18" height="18" viewBox="0 0 18 18"><path d="M1 1L17 17M17 1L1 17" stroke="#1f1f1f" stroke-width="1.900"/></svg>
<!--NB_END-->
<!--COLAB_END-->
<!--TB_START-->
<!-- ===== Windows taskbar ===== -->
<div class="abs" style="left:0;top:1368px;width:2159px;height:71px;background:linear-gradient(90deg,#cfe4ea 0,#cfe5eb 52%,#e3edf0 60%,#f0f2f3 66%,#f0f2f3 95.500%,#d3e6eb 100%)"></div>
<div class="abs" style="left:0;top:1368px;width:2159px;height:2px;background:#a8b4b8"></div>
<!-- start -->
<svg style="left:564px;top:1387px" width="35" height="35" viewBox="0 0 35 35"><defs><linearGradient id="wg" x1="0" y1="0" x2="1" y2="1"><stop offset="0" stop-color="#52c7fb"/><stop offset="1" stop-color="#0a74d0"/></linearGradient></defs><g fill="url(#wg)"><rect x="0" y="0" width="16.600" height="16.600" rx="1"/><rect x="18.400" y="0" width="16.600" height="16.600" rx="1"/><rect x="0" y="18.400" width="16.600" height="16.600" rx="1"/><rect x="18.400" y="18.400" width="16.600" height="16.600" rx="1"/></g></svg>
<!-- search -->
<div class="abs" style="left:620px;top:1381px;width:327px;height:46px;border-radius:23px;background:#eef5f7;border:1px solid #bfd0d5;box-shadow:0 1px 1px rgba(0,0,0,0.08)"></div>
<svg style="left:636px;top:1393px" width="24" height="24" viewBox="0 0 24 24"><circle cx="10" cy="10" r="7.800" fill="none" stroke="#1f1f1f" stroke-width="2.300"/><path d="M15.800 15.800L22 22" stroke="#1f1f1f" stroke-width="2.700" stroke-linecap="round"/></svg>
<div class="t" id="tsearch" style="left:675px;top:1394px;font-size:19.5px;letter-spacing:-0.2px;color:#5a5f63">Search</div>
<!-- mic -->
<svg style="left:972px;top:1386px" width="24" height="36" viewBox="0 0 24 36"><rect x="5.500" y="0" width="13" height="26" rx="3" fill="#8a9096"/><rect x="5.500" y="14" width="13" height="12" rx="2.500" fill="#50565c"/><circle cx="12" cy="19" r="2.600" fill="#f25022"/><path d="M2.500 18v5a6 6 0 0 0 6 6h7a6 6 0 0 0 6-6v-5" fill="none" stroke="#8a9096" stroke-width="2.200"/><path d="M12 29v5M6.500 34.500h11" stroke="#8a9096" stroke-width="2.200"/></svg>
<!-- folder -->
<svg style="left:1033px;top:1388px" width="37" height="33" viewBox="0 0 37 33"><path d="M0 3a2 2 0 0 1 2-2h10l3.500 4H35a2 2 0 0 1 2 2v4H0z" fill="#e8a911"/><path d="M0 7.500h37V31a2 2 0 0 1-2 2H2a2 2 0 0 1-2-2z" fill="#ffd75c"/><path d="M6.500 33v-7.500a3 3 0 0 1 3-3h18a3 3 0 0 1 3 3V33z" fill="#1277d1"/><rect x="11.500" y="26" width="14" height="2" rx="1" fill="#0a4f91"/></svg>
<div class="abs" style="left:1046px;top:1429px;width:10px;height:4px;border-radius:2px;background:#6f7b80"></div>
<!-- chrome active -->
<div class="abs" style="left:1093px;top:1376px;width:52px;height:56px;border-radius:7px;background:#e3eff3;border:1px solid #c8dbe0"></div>
<div class="abs" style="left:1089px;top:1375px;width:52px;height:58px;border-radius:7px;background:#e9f3f6;border:1px solid #cfe0e4"></div>
<svg style="left:1099px;top:1385px" width="37" height="37" viewBox="-18.500 -18.500 37 37"><circle r="18.300" fill="#fbc116"/><path d="M-7.450 4.300L-15.850 -9.150A18.300 18.300 0 0 1 15.850 -9.150L0 -8.600L0 0z" fill="#e33b2e"/><path d="M7.450 4.300L0 18.300A18.300 18.300 0 0 1 -15.850 -9.150L-7.450 4.300L0 0z" fill="#229342"/><circle r="8.600" fill="#fff"/><circle r="6.800" fill="#4285f4"/></svg>
<div class="abs" style="left:1117px;top:1378px;width:26px;height:26px;border-radius:13px;background:#0b4f96"></div>
<div class="t" style="left:1124.500px;top:1383.500px;font-size:15px;color:#cfe0f0">R</div>
<div class="abs" style="left:1105px;top:1428px;width:24px;height:5px;border-radius:2.500px;background:#0067c0"></div>
<!-- chrome 2 -->
<svg style="left:1165px;top:1385px" width="37" height="37" viewBox="-18.500 -18.500 37 37"><circle r="18.300" fill="#fbc116"/><path d="M-7.450 4.300L-15.850 -9.150A18.300 18.300 0 0 1 15.850 -9.150L0 -8.600L0 0z" fill="#e33b2e"/><path d="M7.450 4.300L0 18.300A18.300 18.300 0 0 1 -15.850 -9.150L-7.450 4.300L0 0z" fill="#229342"/><circle r="8.600" fill="#fff"/><circle r="6.800" fill="#4285f4"/></svg>
<div class="abs" style="left:1183px;top:1378px;width:26px;height:26px;border-radius:13px;background:#178a9b"></div>
<div class="t" style="left:1190.500px;top:1383.500px;font-size:15px;color:#c5e6ea">R</div>
<div class="abs" style="left:1179px;top:1429px;width:9px;height:4px;border-radius:2px;background:#6f7b80"></div>
<!-- slack -->
<div class="abs" style="left:1231px;top:1386px;width:36px;height:36px;border-radius:18px;background:#fafafa;border:1px solid #d9dde0"></div>
<svg style="left:1237px;top:1392px" width="24" height="24" viewBox="0 0 24 24"><g stroke-width="4.300" stroke-linecap="round" fill="none"><path d="M2.600 8.700H8.200M8.200 2.500v0.010" stroke="#36c5f0"/><path d="M15.200 2.600V8.400M21.500 8.400h0.010" stroke="#2eb67d"/><path d="M15.300 15.300H21.400M15.300 21.400v0.010" stroke="#ecb22e"/><path d="M8.700 15.400V21.400M2.500 15.400h0.010" stroke="#e01e5a"/></g></svg>
<div class="abs" style="left:1245px;top:1429px;width:9px;height:4px;border-radius:2px;background:#6f7b80"></div>
<!-- notepad -->
<svg style="left:1301px;top:1385px" width="28" height="37" viewBox="0 0 28 37"><rect x="0" y="30" width="28" height="7" rx="1.500" fill="#b7541d"/><rect x="0" y="3" width="28" height="30" rx="1.500" fill="#4fb9dc"/><rect x="0" y="3" width="28" height="6" fill="#2f9bc4"/><g fill="#1b6f96"><rect x="4" y="0" width="2.400" height="6" rx="1.200"/><rect x="10" y="0" width="2.400" height="6" rx="1.200"/><rect x="16" y="0" width="2.400" height="6" rx="1.200"/><rect x="22" y="0" width="2.400" height="6" rx="1.200"/><rect x="5" y="12" width="18" height="2"/><rect x="5" y="17" width="18" height="2"/><rect x="5" y="22" width="18" height="2"/><rect x="5" y="27" width="18" height="2"/></g></svg>
<div class="abs" style="left:1311px;top:1429px;width:9px;height:4px;border-radius:2px;background:#6f7b80"></div>
<!-- snipping tool -->
<svg style="left:1364px;top:1386px" width="36" height="36" viewBox="0 0 36 36"><rect x="0" y="2" width="26" height="26" rx="2" fill="#e4ecef"/><g fill="#d83b01"><rect x="2" y="3" width="4" height="4"/><rect x="8" y="3" width="4" height="4"/><rect x="14" y="3" width="4" height="4"/><rect x="2" y="9" width="4" height="4"/><rect x="2" y="15" width="4" height="4"/></g><path d="M18 5L21 30M5 21.500L31 18.500" stroke="#9aa3ab" stroke-width="3" stroke-linecap="round"/><circle cx="31.500" cy="18.500" r="3" fill="none" stroke="#1e88e5" stroke-width="2.200"/><circle cx="19.500" cy="31.500" r="3" fill="none" stroke="#1e88e5" stroke-width="2.200"/></svg>
<div class="abs" style="left:1377px;top:1429px;width:9px;height:4px;border-radius:2px;background:#6f7b80"></div>
<!-- figma -->
<div class="abs" style="left:1429px;top:1386px;width:36px;height:36px;border-radius:4px;background:#1e1e1e"></div>
<svg style="left:1439px;top:1392px" width="16" height="24" viewBox="0 0 16 24"><path d="M4 0h4v8H4a4 4 0 0 1 0-8z" fill="#f24e1e"/><path d="M8 0h4a4 4 0 0 1 0 8H8z" fill="#ff7262"/><path d="M4 8h4v8H4a4 4 0 0 1 0-8z" fill="#a259ff"/><circle cx="12" cy="12" r="4" fill="#1abcfe"/><path d="M4 16h4v4a4 4 0 1 1-4-4z" fill="#0acf83"/></svg>
<div class="abs" style="left:1443px;top:1429px;width:9px;height:4px;border-radius:2px;background:#6f7b80"></div>
<!-- settings -->
<svg style="left:1494px;top:1385px" width="38" height="38" viewBox="-19 -19 38 38"><g fill="#6c7682"><rect x="-5" y="-18.500" width="10" height="37" rx="2"/><rect x="-5" y="-18.500" width="10" height="37" rx="2" transform="rotate(60)"/><rect x="-5" y="-18.500" width="10" height="37" rx="2" transform="rotate(120)"/><circle r="14.500"/></g><circle r="9.500" fill="#dfe5ea"/><circle r="6.600" fill="#0a5cb8"/></svg>
<div class="abs" style="left:1509px;top:1429px;width:9px;height:4px;border-radius:2px;background:#6f7b80"></div>
<!-- photos -->
<svg style="left:1562px;top:1388px" width="33" height="33" viewBox="0 0 33 33"><defs><linearGradient id="pg" x1="0" y1="0" x2="1" y2="1"><stop offset="0" stop-color="#2a7de1"/><stop offset="1" stop-color="#6a4fd8"/></linearGradient></defs><rect width="33" height="33" rx="5" fill="url(#pg)"/><path d="M0 26L14 12l10 10 3-3 6 6v3a5 5 0 0 1-5 5H5a5 5 0 0 1-5-5z" fill="#35b6f0"/><path d="M0 30l12-9 12 12H5a5 5 0 0 1-5-3z" fill="#1a8fe0"/><circle cx="24.500" cy="7.500" r="2.800" fill="#fff"/></svg>
<div class="abs" style="left:1575px;top:1429px;width:9px;height:4px;border-radius:2px;background:#6f7b80"></div>
<!-- tray -->
<svg style="left:1715px;top:1398px" width="17" height="12" viewBox="0 0 17 12"><path d="M1.500 10L8.500 3l7 7" fill="none" stroke="#1f1f1f" stroke-width="2.200"/></svg>
<svg style="left:1758px;top:1391px" width="28" height="26" viewBox="0 0 28 26"><g fill="none" stroke="#1f1f1f" stroke-width="1.700"><path d="M2.500 11A10.500 10.500 0 0 1 21.500 5.500"/><path d="M22 1v5h-5"/><path d="M22 16a10.500 10.500 0 0 1-18 4"/><path d="M3 24.500v-5h5"/></g><circle cx="19.500" cy="19" r="6" fill="#ff9b0f"/></svg>
<div class="t" style="left:1806px;top:1391px;font-size:25px;color:#1f1f1f;font-weight:300">あ</div>
<svg style="left:1863px;top:1391px" width="26" height="26" viewBox="0 0 26 26"><circle cx="13" cy="13" r="11.700" fill="none" stroke="#1f1f1f" stroke-width="1.700"/><path d="M14.500 6.500v8a4 4 0 0 1-6.500 3" fill="none" stroke="#1f1f1f" stroke-width="1.800"/></svg>
<svg style="left:1920px;top:1393px" width="26" height="22" viewBox="0 0 26 22"><g fill="none" stroke="#1f1f1f" stroke-width="1.900" stroke-linecap="round"><path d="M1.500 8a16.500 16.500 0 0 1 23 0"/><path d="M5.300 12.200a11 11 0 0 1 15.400 0"/><path d="M9.200 16a5.500 5.500 0 0 1 7.600 0"/></g><circle cx="13" cy="19.300" r="1.900" fill="#1f1f1f"/></svg>
<svg style="left:1957px;top:1393px" width="26" height="22" viewBox="0 0 26 22"><path d="M1.500 7.500h4l6-5.500v18l-6-5.500h-4z" fill="none" stroke="#1f1f1f" stroke-width="1.700" stroke-linejoin="round"/><path d="M14.500 7.500a5 5 0 0 1 0 7M17.500 4.500a9 9 0 0 1 0 13" fill="none" stroke="#1f1f1f" stroke-width="1.700" stroke-linecap="round"/><path d="M20.800 1.800a13 13 0 0 1 0 18.400" fill="none" stroke="#b9bfc4" stroke-width="1.700" stroke-linecap="round"/></svg>
<svg style="left:1993px;top:1391px" width="31" height="21" viewBox="0 0 31 21"><rect x="1" y="4" width="26" height="15.500" rx="4" fill="none" stroke="#1f1f1f" stroke-width="1.800"/><rect x="3.300" y="6.300" width="21.400" height="10.900" rx="2" fill="#107c10"/><path d="M28 9v5.500a1.800 1.800 0 0 0 1.800-1.800v-1.900A1.800 1.800 0 0 0 28 9z" fill="#1f1f1f"/><path d="M15.500 0l-5 8.500h4l-1.500 6 6-8.500h-4z" fill="#1f1f1f" stroke="#f0f2f3" stroke-width="1"/></svg>
<div class="t" id="clk" style="left:2030px;width:100.5px;text-align:right;top:1383px;font-size:17.5px;letter-spacing:-0.3px;color:#1f1f1f">5:18 PM</div>
<div class="t" id="dat" style="left:2030px;width:100.5px;text-align:right;top:1407px;font-size:17.5px;letter-spacing:0.34px;color:#1f1f1f">1/26/2026</div>
<!--TB_END-->
</body>
</html>
